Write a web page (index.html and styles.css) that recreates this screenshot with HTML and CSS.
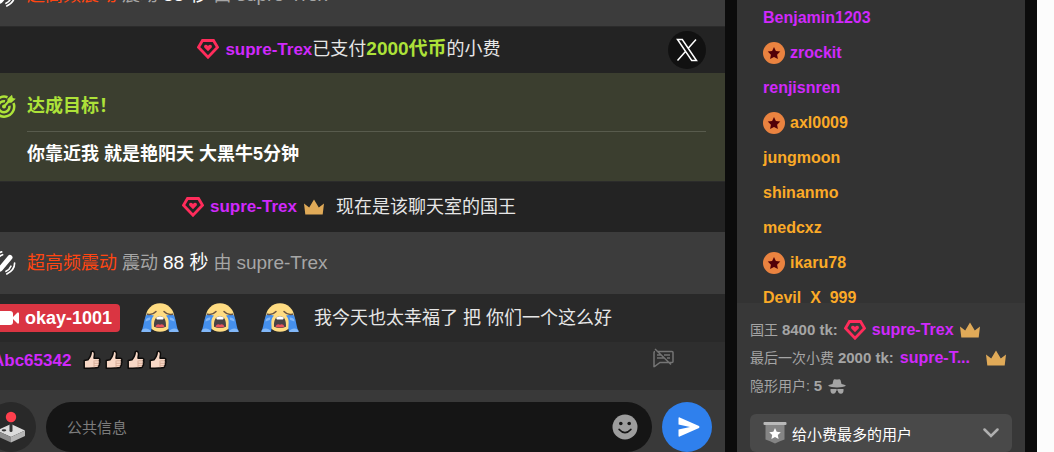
FILE: index.html
```html
<!DOCTYPE html>
<html lang="zh-CN">
<head>
  <meta charset="UTF-8">
  <meta name="viewport" content="width=device-width, initial-scale=1.0">
  <title>公共聊天</title>
  <link rel="stylesheet" href="styles.css">
</head>
<body>
  <!-- Shared icons -->
  <svg class="sprite" aria-hidden="true">
    <symbol id="diamond" viewBox="0 0 22 20">
      <path d="M5.5 1.5h11l4 6.8L11 18.2 1.5 8.3z" fill="none" stroke="#ff2c5b" stroke-width="2.8"/>
      <path d="M11 12.2 7.3 8.6c-1.2-2.8 2.2-3.8 3.7-1.6 1.5-2.2 4.9-1.2 3.7 1.6z" fill="#ff2c5b"/>
    </symbol>
    <symbol id="crown" viewBox="0 0 20 16">
      <path d="M0 4.5l5.2 4L10 .5l4.800 8 5.200-4L18.700 15.500H1.300z" fill="#e0aa58"/>
    </symbol>
    <symbol id="vibe" viewBox="0 0 26 26">
      <path d="M9 19.500 19.500 7" stroke="#fff" stroke-width="5.400" stroke-linecap="round"/>
      <path d="M6 9c1-2.500 3-4 5.500-5M3 8c1-3.500 4-6 7.500-7M20.500 16.500c-1 2.500-2.800 4.300-5.300 5.500M24.500 13c0 5-3.500 9.500-8.500 11.800" fill="none" stroke="#fff" stroke-width="1.800" stroke-linecap="round"/>
    </symbol>
    <symbol id="star-badge" viewBox="0 0 22 22">
      <circle cx="11" cy="11" r="11" fill="#ea8340"/>
      <path d="M11 5l1.900 4 4.400.6-3.200 3.100.8 4.300-3.900-2.100L7.100 17l.8-4.300-3.200-3.100 4.400-.6z" fill="#520008"/>
    </symbol>
    <symbol id="cry" viewBox="0 0 38 30">
      <circle cx="19" cy="14.500" r="14.300" fill="#ffdc82"/>
      <path d="M6.500 10.500C2.500 15 3.500 21 .5 28.500h9.500C12 23 8 18 13 12.500c-2-.2-4.500-.9-6.500-2z" fill="#4590ee"/>
      <path d="M31.500 10.500c4 4.500 3 10.500 6 18H28C26 23 30 18 25 12.500c2-.2 4.500-.9 6.500-2z" fill="#4590ee"/>
      <path d="M.8 27q4.200-3 8.500.2L10 29H.3zM28.700 27.200q4.300-3.200 8.500-.2l.5 2H28zM5 16q2-2 4.500-1.500L8.800 17 4.500 18.500zM33 16q-2-2-4.500-1.500l.7 2.500 4.300 1.500z" fill="#81b7f8"/>
      <path d="M6.500 11.200c3 .8 6 0 8.500-2.700M31.500 11.200c-3 .8-6 0-8.500-2.700" fill="none" stroke="#6b5542" stroke-width="1.500" stroke-linecap="round"/>
      <path d="M19 13.200c-4.300 0-6.300 4-6 10.500q6 2.600 12 0c.3-6.500-1.700-10.500-6-10.500z" fill="#474345"/>
      <path d="M15 14.800q4-3 8 0l-1 1.700h-6z" fill="#fff"/>
      <path d="M14.500 23.800c1-3 3-3 4.500-2 1.500-1 3.500-1 4.500 2q-4.500 1.600-9 0z" fill="#e8515b"/>
    </symbol>
    <symbol id="thumb" viewBox="0 0 18 20">
      <path d="M1.200 10.500 5 9.800c2-2.200 3.200-4.200 3.300-8 1.900-1.200 3.200-.2 3.200 2.200L11 8.200h4.300c2 .1 2 2.200.9 2.600 1.200.7.900 2.200-.1 2.500.8.800.4 2.100-.6 2.400.4 1.300-.4 2-1.700 2.100L6 18.300H1.200z" fill="#f8d8c6" stroke="#0d0b0a" stroke-width="1.500" stroke-linejoin="round"/>
      <path d="M11.500 10.800h4.300M11.200 13.300H16M11.200 15.700h4.200M11 10.500v6.800" fill="none" stroke="#cfa58f" stroke-width=".8"/>
    </symbol>
  </svg>

  <div class="room">
    <main class="chat">
      <div class="messages">
        <!-- Toy vibration notice -->
        <div class="msg msg-toy">
          <svg class="lead-icon"><use href="#vibe"/></svg>
          <p><span class="toy-level">超高频震动</span> 震动 <span class="toy-time">88 秒</span> 由 <span class="toy-user">supre-Trex</span></p>
        </div>

        <!-- Tip notice -->
        <div class="msg msg-notice msg-tip">
          <svg class="diamond"><use href="#diamond"/></svg>
          <p><b class="name purple">supre-Trex</b>已支付<b class="amount">2000代币</b>的小费</p>
          <button class="x-btn" type="button" aria-label="X">
            <svg viewBox="0 0 22 24"><path d="M1.500 1.500h4.800l14.200 21h-4.800zM20 1.500 12 10.500M9.500 13.500 1.500 22.500" fill="none" stroke="#fff" stroke-width="1.500"/></svg>
          </button>
        </div>

        <!-- Goal reached -->
        <div class="msg-goal">
          <svg class="lead-icon" viewBox="0 0 24 24">
            <path d="M15.500 3.200A10 10 0 1 0 21.500 9M13 7.300a5.500 5.500 0 1 0 4.400 4.500" fill="none" stroke="#ade239" stroke-width="2.500"/>
            <circle cx="12" cy="12.500" r="2" fill="#ade239"/>
            <path d="M12 12.500 18 6" stroke="#ade239" stroke-width="2.300"/>
            <path d="M15.500 8.800V5L20 .8 20.800 4l3 .8-4.500 4z" fill="#ade239"/>
          </svg>
          <div class="goal-body">
            <h2>达成目标！</h2>
            <p>你靠近我 就是艳阳天 大黑牛5分钟</p>
          </div>
        </div>

        <!-- King of the room -->
        <div class="msg msg-notice msg-king">
          <svg class="diamond"><use href="#diamond"/></svg>
          <b class="name purple">supre-Trex</b>
          <svg class="crown"><use href="#crown"/></svg>
          <p>现在是该聊天室的国王</p>
        </div>

        <div class="msg msg-toy">
          <svg class="lead-icon"><use href="#vibe"/></svg>
          <p><span class="toy-level">超高频震动</span> 震动 <span class="toy-time">88 秒</span> 由 <span class="toy-user">supre-Trex</span></p>
        </div>

        <!-- Model message -->
        <div class="msg msg-model">
          <span class="model-badge">
            <svg class="camera" viewBox="0 0 22 14"><rect width="16" height="14" rx="3" fill="#fff"/><path d="M15 7l5.500-5.500q1.500-.5 1.500 1v9q0 1.500-1.500 1z" fill="#fff"/></svg>
            okay-1001
          </span>
          <div class="cry-list">
            <svg><use href="#cry"/></svg>
            <svg><use href="#cry"/></svg>
            <svg><use href="#cry"/></svg>
          </div>
          <p>我今天也太幸福了 把 你们一个这么好</p>
        </div>

        <!-- User message -->
        <div class="msg msg-user">
          <b class="name purple">Abc65342</b>
          <div class="thumbs">
            <svg><use href="#thumb"/></svg>
            <svg><use href="#thumb"/></svg>
            <svg><use href="#thumb"/></svg>
            <svg><use href="#thumb"/></svg>
          </div>
          <button class="mute-btn" type="button" aria-label="禁言">
            <svg viewBox="0 0 22 20"><path d="M6 3.500h14q1 0 1 1v9q0 1-1 1H8l-5.500 4H2v-14q0-1 1-1M5 7h4M12 7h6M5 10h7M15 10h3M3 1l16 15.500" fill="none" stroke="#747474" stroke-width="1.500"/></svg>
          </button>
        </div>
      </div>

      <form class="composer">
        <button class="games-btn" type="button" aria-label="游戏">
          <svg viewBox="0 0 30 32">
            <path d="M1 19.500 15 13l14 6.500L15 26z" fill="#dcdcdc"/>
            <path d="M1 19.500 15 26v5.500L1 25z" fill="#8d8d8d"/>
            <path d="M29 19.500 15 26v5.500L29 25z" fill="#b5b5b5"/>
            <ellipse cx="8" cy="19.300" rx="2.300" ry="1.100" fill="#333"/>
            <path d="M15 10v9.500" stroke="#333" stroke-width="3" stroke-linecap="round"/>
            <circle cx="15" cy="6" r="5.200" fill="#ff3f4d"/>
          </svg>
        </button>
        <div class="input-wrap">
          <input type="text" placeholder="公共信息" aria-label="公共信息">
          <button class="smile-btn" type="button" aria-label="表情">
            <svg viewBox="0 0 26 26">
              <circle cx="13" cy="13" r="12.500" fill="#9d9d9d"/>
              <circle cx="8.800" cy="9.500" r="1.800" fill="#151515"/>
              <circle cx="17.200" cy="9.500" r="1.800" fill="#151515"/>
              <path d="M7.200 15.500q5.800 6.400 11.600 0" fill="none" stroke="#151515" stroke-width="1.800" stroke-linecap="round"/>
            </svg>
          </button>
        </div>
        <button class="send-btn" type="submit" aria-label="发送">
          <svg viewBox="0 0 22 20"><path d="M.5 1.200q0-1.200 1.200-.8L21 9q1 1 0 2L1.700 19.600Q.5 20 .5 18.800V12.500L12 10 .5 7.500z" fill="#fff"/></svg>
        </button>
      </form>
    </main>

    <aside class="sidebar">
      <ul class="users">
        <li class="purple">Benjamin1203</li>
        <li class="purple"><svg><use href="#star-badge"/></svg>zrockit</li>
        <li class="purple">renjisnren</li>
        <li><svg><use href="#star-badge"/></svg>axl0009</li>
        <li>jungmoon</li>
        <li>shinanmo</li>
        <li>medcxz</li>
        <li><svg><use href="#star-badge"/></svg>ikaru78</li>
        <li>Devil_X_999</li>
      </ul>
      <div class="stats">
        <div class="stat">
          <span>国王 <b>8400 tk:</b></span>
          <svg class="diamond"><use href="#diamond"/></svg>
          <b class="stat-name purple">supre-Trex</b>
          <svg class="crown"><use href="#crown"/></svg>
        </div>
        <div class="stat">
          <span>最后一次小费 <b>2000 tk:</b></span>
          <b class="stat-name short purple">supre-T...</b>
          <svg class="crown"><use href="#crown"/></svg>
        </div>
        <div class="stat">
          <span>隐形用户: <b>5</b></span>
          <svg class="spy" viewBox="0 0 18 15">
            <path d="M4.500 5 5.500 1q.5-1 1.500-.8 2 .6 4 0 1-.2 1.500.8l1 4q3.500.7 4.500 1.800-3 1.700-9 1.700T0 6.800Q1 5.700 4.500 5z" fill="#a5a5a5"/>
            <path d="M2.500 10h5.300l1.200.6 1.200-.6h5.300q.5 4.700-2.700 4.700-2.500 0-3-3.200H8.200q-.5 3.200-3 3.200Q2 14.700 2.500 10z" fill="#a5a5a5"/>
          </svg>
        </div>
        <button class="top-btn" type="button">
          <svg class="pennant" viewBox="0 0 24 22">
            <path d="M2.500 2h19v15.500Q17 19 12 21.500 7 19 2.500 17.500z" fill="#858585"/>
            <rect x=".5" width="23" height="3" rx="1" fill="#b9b9b9"/>
            <path d="M12 6l1.700 3.700 4.100.5-3 2.800.8 4-3.600-2-3.600 2 .8-4-3-2.800 4.100-.5z" fill="#fff"/>
          </svg>
          给小费最多的用户
          <svg class="chevron" viewBox="0 0 16 10"><path d="M1.500 1.500 8 8l6.500-6.500" fill="none" stroke="#b0b0b0" stroke-width="2.500" stroke-linecap="round"/></svg>
        </button>
      </div>
    </aside>
  </div>
</body>
</html>
```

FILE: styles.css
```css
* {
  margin: 0;
  padding: 0;
  box-sizing: border-box;
}
body {
  font-family: "Liberation Sans", "Noto Sans CJK SC", sans-serif;
  font-size: 18px;
  line-height: 26px;
  color: #e6e6e6;
  background-color: #fcfcfc;
  overflow: hidden;
}
button {
  border: none;
  font-family: inherit;
  cursor: pointer;
}
svg {
  display: block;
  flex: none;
}
.sprite {
  width: 0;
  height: 0;
  position: absolute;
}

/* The room runs past the left edge of the window */
.room {
  display: flex;
  gap: 12px;
  height: 100vh;
  margin-left: -27px;
  margin-right: 17px;
  padding-right: 12px;
  background-color: #0c0c0c;
}
.chat {
  flex: 1;
  min-width: 0;
  display: flex;
  flex-direction: column;
  background-color: #393939;
}

/* Messages stick to the bottom */
.messages {
  flex: 1;
  min-height: 0;
  display: flex;
  flex-direction: column;
  justify-content: flex-end;
  overflow: hidden;
}
.msg {
  display: flex;
  align-items: center;
  flex: none;
  padding: 0 19px;
}
.lead-icon {
  width: 24px;
  height: 24px;
  margin-right: 11px;
}
.diamond {
  width: 22px;
  height: 20px;
}
.crown {
  width: 20px;
  height: 16px;
}
.name {
  font-size: 17px;
}
.purple {
  color: #d029fb;
}
.msg-toy {
  min-height: 62px;
  background-color: #3c3c3c;
  color: #a6a6a6;
}
.toy-level {
  color: #ff4612;
}
.toy-time {
  color: #fff;
}
.toy-time,
.toy-user {
  font-size: 19px;
}
.msg-notice {
  justify-content: center;
  background-color: #232323;
  border-top: 1px solid #2b2b2b;
}
.msg-tip {
  position: relative;
  min-height: 47px;
  padding-bottom: 2px;
}
.msg-tip .diamond,
.msg-king .diamond {
  margin-right: 6px;
}
.amount {
  font-size: 19px;
  color: #ade239;
}
.x-btn {
  position: absolute;
  top: 4px;
  right: 19px;
  display: grid;
  place-items: center;
  width: 38px;
  height: 38px;
  border-radius: 50%;
  background-color: #111;
}
.x-btn svg {
  width: 22px;
  height: 24px;
}
.msg-goal {
  display: flex;
  flex: none;
  padding: 20px 19px 14px;
  background-color: #3b3e2f;
}
.msg-goal .lead-icon {
  margin-top: 1px;
}
.goal-body {
  flex: 1;
}
.goal-body h2 {
  font-size: 18px;
  color: #ade239;
  padding-bottom: 12px;
  border-bottom: 1px solid #585b4d;
}
.goal-body p {
  padding-top: 9px;
  font-weight: bold;
  color: #fff;
}
.msg-king {
  min-height: 51px;
}
.msg-king .crown {
  margin: 0 12px 0 7px;
}
.msg-model {
  min-height: 48px;
  background-color: #292929;
}
.model-badge {
  display: flex;
  align-items: center;
  gap: 6px;
  height: 28px;
  padding: 0 8px 0 5px;
  border-radius: 4px;
  background-color: #da3542;
  font-weight: bold;
  color: #fff;
}
.camera {
  width: 22px;
  height: 14px;
}
.cry-list {
  display: flex;
  gap: 22px;
  margin: 0 15px 0 21px;
}
.cry-list svg {
  width: 38px;
  height: 30px;
}
.msg-user {
  align-items: flex-start;
  min-height: 48px;
  padding-top: 6px;
  background-color: #2e2e2e;
}
.thumbs {
  display: flex;
  gap: 4px;
  margin: 2px 0 0 12px;
}
.thumbs svg {
  width: 18px;
  height: 20px;
}
.mute-btn {
  margin-left: auto;
  margin-right: 32px;
  background: none;
}
.mute-btn svg {
  width: 22px;
  height: 20px;
}

/* Message input */
.composer {
  display: flex;
  gap: 10px;
  padding: 12px 13px 0;
}
.games-btn,
.send-btn {
  display: grid;
  place-items: center;
  flex: none;
  width: 50px;
  height: 50px;
  border-radius: 50%;
}
.games-btn {
  background-color: #292929;
}
.games-btn svg {
  width: 30px;
  height: 32px;
}
.send-btn {
  padding-left: 4px;
  background-color: #2f80ed;
}
.send-btn svg {
  width: 22px;
  height: 20px;
}
.input-wrap {
  display: flex;
  align-items: center;
  flex: 1;
  height: 50px;
  padding: 0 14px 0 21px;
  border-radius: 25px;
  background-color: #151515;
}
.input-wrap input {
  flex: 1;
  min-width: 0;
  border: none;
  outline: none;
  background: none;
  font-family: inherit;
  font-size: 15px;
  color: #fff;
}
.input-wrap input::placeholder {
  color: #7c7c7c;
}
.smile-btn {
  background: none;
}
.smile-btn svg {
  width: 26px;
  height: 26px;
}

/* User list */
.sidebar {
  flex: none;
  display: flex;
  flex-direction: column;
  width: 288px;
  background-color: #333;
}
.users {
  flex: 1;
  min-height: 0;
  overflow: hidden;
  list-style: none;
  padding-left: 26px;
  font-size: 16px;
  font-weight: bold;
  color: #fbaa27;
}
.users li {
  display: flex;
  align-items: center;
  gap: 5px;
  height: 35px;
}
.users svg {
  width: 22px;
  height: 22px;
}
.stats {
  padding: 13px 13px 0;
  background-color: #383838;
}
.stat {
  display: flex;
  align-items: center;
  gap: 6px;
  height: 28px;
  font-size: 14px;
  color: #a5a5a5;
  white-space: nowrap;
}
.stat b {
  font-size: 15px;
}
.stat .stat-name {
  font-size: 16px;
}
.stat .short {
  width: 80px;
}
.spy {
  width: 18px;
  height: 15px;
}
.top-btn {
  display: flex;
  align-items: center;
  gap: 5px;
  width: 100%;
  height: 38px;
  margin-top: 14px;
  padding: 0 13px;
  border-radius: 6px;
  background-color: #494949;
  font-size: 15px;
  color: #fff;
}
.pennant {
  width: 24px;
  height: 22px;
}
.chevron {
  width: 16px;
  height: 10px;
  margin-left: auto;
}
```
